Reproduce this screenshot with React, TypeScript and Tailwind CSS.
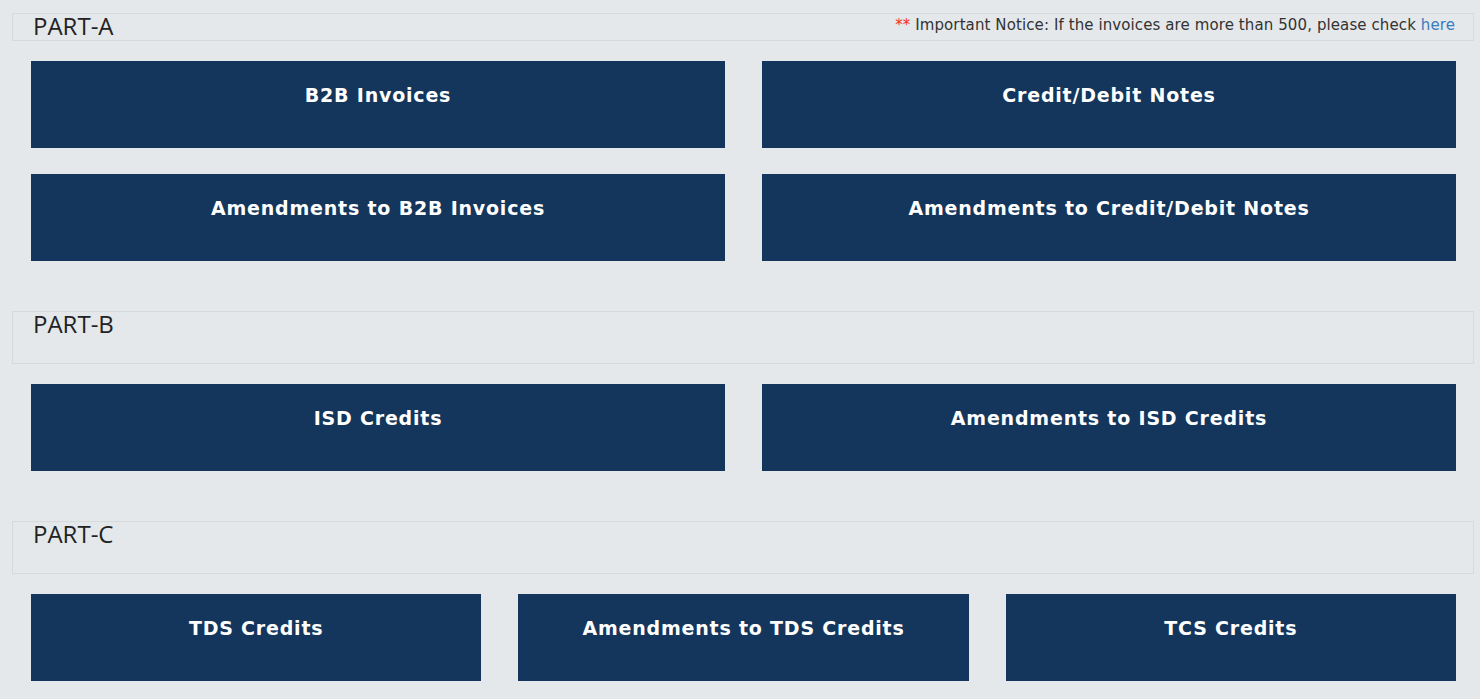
import React from 'react';

type Section = {
    title: string;
    cols: 2 | 3;
    items: string[];
};

const sections: Section[] = [
    {
        title: 'PART-A',
        cols: 2,
        items: [
            'B2B Invoices',
            'Credit/Debit Notes',
            'Amendments to B2B Invoices',
            'Amendments to Credit/Debit Notes',
        ],
    },
    { title: 'PART-B', cols: 2, items: ['ISD Credits', 'Amendments to ISD Credits'] },
    {
        title: 'PART-C',
        cols: 3,
        items: ['TDS Credits', 'Amendments to TDS Credits', 'TCS Credits'],
    },
];

function Tile({ label }: { label: string }) {
    return (
        <button
            type="button"
            className="flex h-[87px] w-full cursor-pointer items-start justify-center bg-[#14365c] pt-[24px] text-center text-[19px] font-bold leading-[21px] tracking-[0.8px] text-white"
            style={{ fontFamily: '"DejaVu Sans", Verdana, sans-serif' }}
        >
            {label}
        </button>
    );
}

export default function App() {
    return (
        <div className="min-h-[699px] bg-[#e4e8eb] pl-[12px] pr-[6px] pt-[13px]">
            {sections.map((section, i) => (
                <div key={section.title} className={i === 0 ? '' : 'mt-[50px]'}>
                    <div
                        className={`flex items-start justify-between border border-[#d7dadd] pl-[20px] pr-[18px] ${
                            i === 0 ? 'h-[28px]' : 'h-[53px]'
                        }`}
                    >
                        <h4
                            className="text-[24px] font-normal leading-[23px] text-[#222]"
                            style={{ fontFamily: '"Open Sans", sans-serif' }}
                        >
                            {section.title}
                        </h4>
                        {i === 0 && (
                            <p
                                className="mt-[3px] text-[15px] leading-[17px] tracking-[0.1px] text-[#333]"
                                style={{ fontFamily: '"DejaVu Sans", Verdana, sans-serif' }}
                            >
                                <span className="text-[#ff2a1a]">**</span> Important Notice: If the
                                invoices are more than 500, please check{' '}
                                <a href="#" className="text-[#3b7bbf]">
                                    here
                                </a>
                            </p>
                        )}
                    </div>
                    <div
                        className={`mt-[20px] grid gap-x-[37px] gap-y-[26px] pl-[19px] pr-[18px] ${
                            section.cols === 3 ? 'grid-cols-3' : 'grid-cols-2'
                        }`}
                    >
                        {section.items.map((item) => (
                            <Tile key={item} label={item} />
                        ))}
                    </div>
                </div>
            ))}
        </div>
    );
}
